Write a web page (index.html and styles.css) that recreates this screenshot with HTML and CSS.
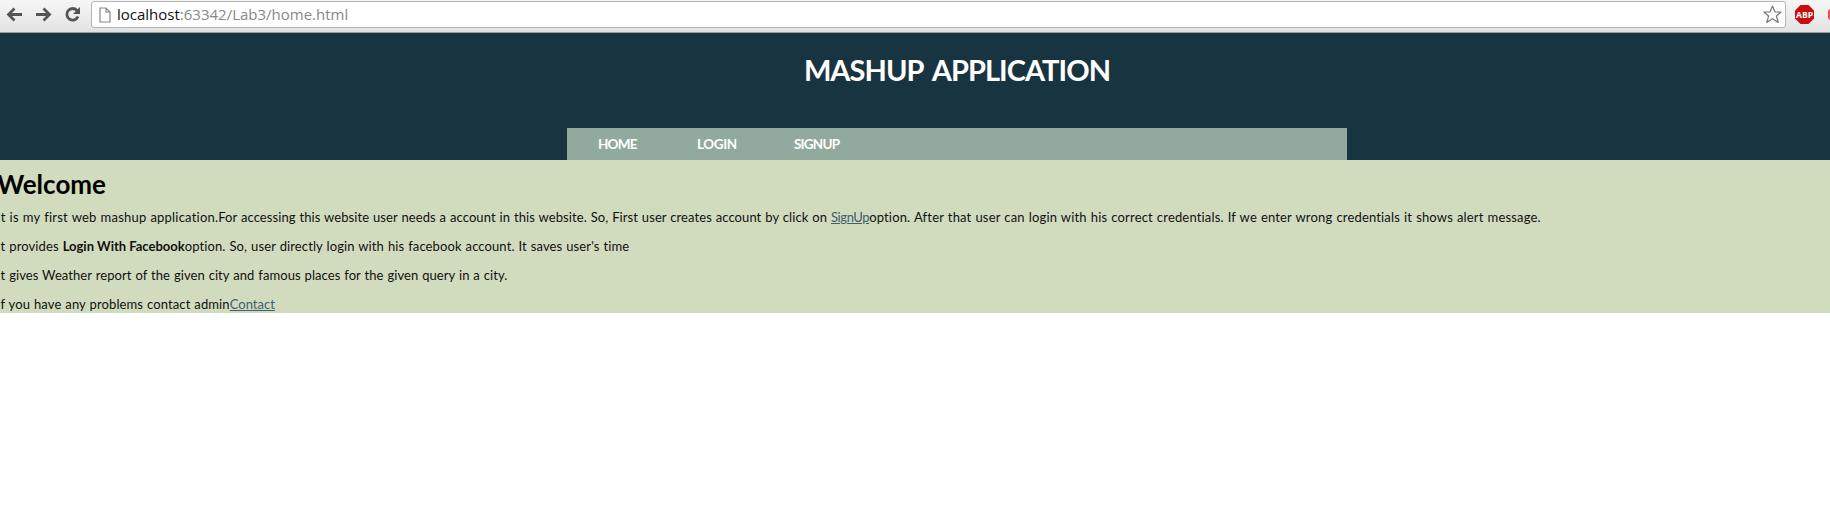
FILE: index.html
```html
<!DOCTYPE html>
<html lang="en">
<head>
<meta charset="utf-8">
<title>Mashup Application</title>
<link rel="stylesheet" href="styles.css">
</head>
<body>
<div class="toolbar">
  <svg class="nav-icons" width="91" height="32" viewBox="0 0 91 32" fill="none" stroke="#555" stroke-width="2.8">
    <path d="M22 14.5H9M14.5 8.5L8.5 14.5L14.5 20.5"/>
    <path d="M36 14.5H49M43.5 8.5L49.500 14.5L43.500 20.5"/>
    <path d="M77 10.500A5.800 5.800 0 1 0 78 16.500"/>
    <path d="M80 7V14H73Z" fill="#555" stroke="none"/>
  </svg>
  <div class="address">
    <svg width="12" height="16" viewBox="0 0 12 16" fill="#fff" stroke="#888" stroke-width="1.2"><path d="M1 1H7L11 5V15H1ZM7 1V5H11"/></svg>
    <span class="url"><b>localhost</b>:63342/Lab3/home.html</span>
    <svg class="star" width="19" height="19" viewBox="0 0 19 19" fill="#fff" stroke="#777" stroke-width="1.2" stroke-linejoin="round"><path d="M9.500 1L12 7H18L13.400 11L15.200 17.500L9.500 13.700L3.800 17.500L5.600 11L1 7H7Z"/></svg>
  </div>
  <svg class="extensions" width="35" height="32" viewBox="0 0 35 32">
    <path d="M5.500 5H13.500L19 10.500V18.500L13.500 24H5.500L0 18.500V10.500Z" fill="#c70d0d"/>
    <text class="abp" x="9.500" y="17.800" text-anchor="middle" textLength="17" lengthAdjust="spacingAndGlyphs">ABP</text>
    <rect x="33" y="9" width="11" height="11" rx="3" fill="#ee4b4b"/>
  </svg>
</div>
<header class="header">
  <h1 class="title">MASHUP APPLICATION</h1>
  <nav class="menu"><a class="home">HOME</a><a class="login">LOGIN</a><a class="signup">SIGNUP</a></nav>
</header>
<main class="content">
  <h2 class="welcome">Welcome</h2>
  <p><span class="lead">It is my first web mashup application.</span><span class="steps">For accessing this website user needs a account in this website. So, First user creates account by click on </span><a class="signup-link">SignUp</a><span class="after">option. After that user can login with his correct credentials. If we enter wrong credentials it shows alert message.</span></p>
  <p>It provides <strong>Login With Facebook</strong>option. So, user directly login with his facebook account. It saves user's time</p>
  <p class="report">It gives Weather report of the given city and famous places for the given query in a city.</p>
  <p>If you have any problems contact admin<a>Contact</a></p>
</main>
</body>
</html>
```

FILE: styles.css
```css
body { margin: 0; background: #fff; font: 13px/17px Lato, "Open Sans", sans-serif; color: #111; overflow: hidden; }
.toolbar { display: flex; background: linear-gradient(#f6f6f6, #e3e3e3); border-bottom: 1px solid #9b9b9b; box-sizing: border-box; height: 33px; }
.nav-icons { flex: none; }
.address { display: flex; align-items: center; box-sizing: border-box; width: 1695px; height: 27px; margin-top: 1px; padding: 0 3px 0 7px; background: #fff; border: 1px solid #b5b5b5; border-radius: 3px; }
.url { margin: 0 0 2px 6px; font: 15px/20px "Open Sans", sans-serif; color: #888; }
.url b { font-weight: 400; color: #111; }
.star { margin-left: auto; }
.extensions { margin-left: 9px; flex: none; }
.abp { font: bold 9px "Open Sans", sans-serif; fill: #fff; }
.header { display: flex; flex-direction: column; align-items: center; height: 127px; background: #193441; color: #fff; padding-left: 84px; }
.title { margin: 19px 0 0; font-size: 29px; line-height: 36px; height: 76px; letter-spacing: -0.95px; word-spacing: 4px; }
.menu { display: flex; width: 780px; height: 32px; line-height: 32px; background: #91aa9d; font-size: 13.5px; font-weight: 700; }
.menu a { padding-left: 31px; width: 68px; letter-spacing: -0.8px; }
.menu .login { width: 66px; letter-spacing: -0.4px; }
.content { height: 153px; background: #d1dbbd; white-space: nowrap; overflow: hidden; }
.content > * { margin-left: -3px; }
.welcome { margin-top: 10px; margin-bottom: 11px; font-size: 26px; line-height: 28px; color: #000; }
.content p { margin-top: 0; margin-bottom: 12px; letter-spacing: 0.11px; word-spacing: 0.5px; }
.content .lead { letter-spacing: 0.21px; }
.content .steps { letter-spacing: 0.076px; }
.content .after { letter-spacing: 0.17px; }
.content .report { letter-spacing: 0.07px; }
.content strong { letter-spacing: 0; word-spacing: 0; }
.content a { color: #3e606f; text-decoration: underline; letter-spacing: 0; }
.content .signup-link { letter-spacing: -0.4px; }
```
